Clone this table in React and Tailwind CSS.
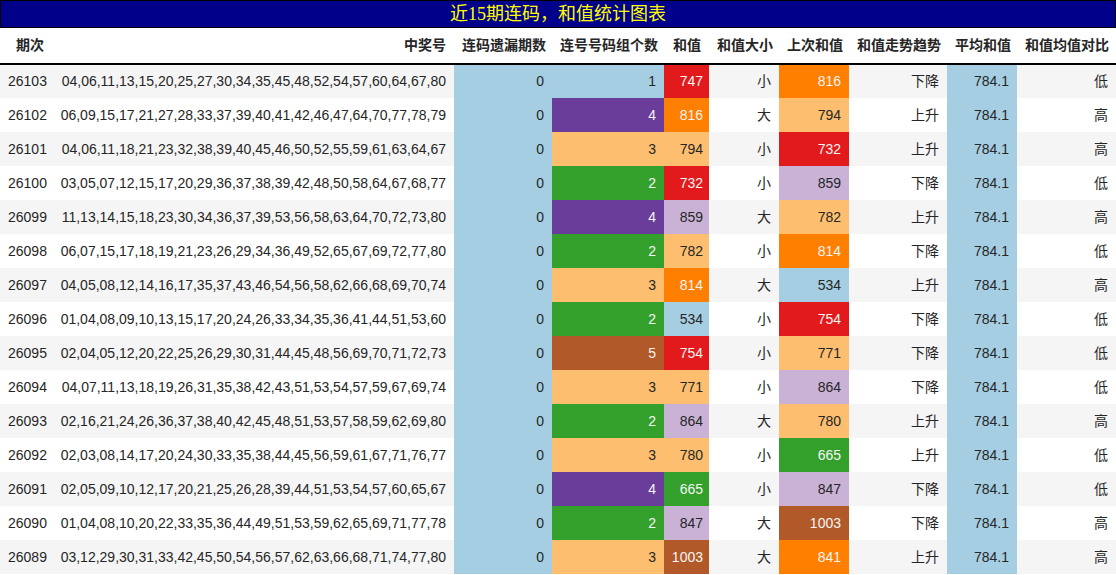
import React from "react";

const rows = [
  ["26103", "04,06,11,13,15,20,25,27,30,34,35,45,48,52,54,57,60,64,67,80", 0, 1, 747, "小", 816, "下降", "低"],
  ["26102", "06,09,15,17,21,27,28,33,37,39,40,41,42,46,47,64,70,77,78,79", 0, 4, 816, "大", 794, "上升", "高"],
  ["26101", "04,06,11,18,21,23,32,38,39,40,45,46,50,52,55,59,61,63,64,67", 0, 3, 794, "小", 732, "上升", "高"],
  ["26100", "03,05,07,12,15,17,20,29,36,37,38,39,42,48,50,58,64,67,68,77", 0, 2, 732, "小", 859, "下降", "低"],
  ["26099", "11,13,14,15,18,23,30,34,36,37,39,53,56,58,63,64,70,72,73,80", 0, 4, 859, "大", 782, "上升", "高"],
  ["26098", "06,07,15,17,18,19,21,23,26,29,34,36,49,52,65,67,69,72,77,80", 0, 2, 782, "小", 814, "下降", "低"],
  ["26097", "04,05,08,12,14,16,17,35,37,43,46,54,56,58,62,66,68,69,70,74", 0, 3, 814, "大", 534, "上升", "高"],
  ["26096", "01,04,08,09,10,13,15,17,20,24,26,33,34,35,36,41,44,51,53,60", 0, 2, 534, "小", 754, "下降", "低"],
  ["26095", "02,04,05,12,20,22,25,26,29,30,31,44,45,48,56,69,70,71,72,73", 0, 5, 754, "小", 771, "下降", "低"],
  ["26094", "04,07,11,13,18,19,26,31,35,38,42,43,51,53,54,57,59,67,69,74", 0, 3, 771, "小", 864, "下降", "低"],
  ["26093", "02,16,21,24,26,36,37,38,40,42,45,48,51,53,57,58,59,62,69,80", 0, 2, 864, "大", 780, "上升", "高"],
  ["26092", "02,03,08,14,17,20,24,30,33,35,38,44,45,56,59,61,67,71,76,77", 0, 3, 780, "小", 665, "上升", "低"],
  ["26091", "02,05,09,10,12,17,20,21,25,26,28,39,44,51,53,54,57,60,65,67", 0, 4, 665, "小", 847, "下降", "低"],
  ["26090", "01,04,08,10,20,22,33,35,36,44,49,51,53,59,62,65,69,71,77,78", 0, 2, 847, "大", 1003, "下降", "高"],
  ["26089", "03,12,29,30,31,33,42,45,50,54,56,57,62,63,66,68,71,74,77,80", 0, 3, 1003, "大", 841, "上升", "高"],
];

// colour bins for the sum columns
function sumColor(v) {
  if (v < 600) return "bg-[#a6cee3] text-[#262626]";
  if (v < 700) return "bg-[#33a02c] text-[#f5f5f5]";
  if (v < 765) return "bg-[#e31a1c] text-[#f5f5f5]";
  if (v < 800) return "bg-[#fdbf6f] text-[#262626]";
  if (v < 845) return "bg-[#ff7f00] text-[#f5f5f5]";
  if (v < 900) return "bg-[#cab2d6] text-[#262626]";
  return "bg-[#b15928] text-[#f5f5f5]";
}

const countColors = {
  1: "bg-[#a6cee3] text-[#262626]",
  2: "bg-[#33a02c] text-[#f5f5f5]",
  3: "bg-[#fdbf6f] text-[#262626]",
  4: "bg-[#6a3d9a] text-[#f5f5f5]",
  5: "bg-[#b15928] text-[#f5f5f5]",
};

const headers = [
  ["期次", "w-[52px]"],
  ["中奖号", "w-[402px]"],
  ["连码遗漏期数", "w-[98px]"],
  ["连号号码组个数", "w-[112px]"],
  ["和值", "w-[45px]"],
  ["和值大小", "w-[70px]"],
  ["上次和值", "w-[70px]"],
  ["和值走势趋势", "w-[98px]"],
  ["平均和值", "w-[70px]"],
  ["和值均值对比", "w-[99px]"],
];

export default function App() {
  return (
    <div
      className="w-[1116px] h-[575px] bg-white text-[#262626] overflow-hidden"
      style={{ fontFamily: '"Liberation Sans", "Noto Sans CJK SC", sans-serif' }}
    >
      {/* Title */}
      <div
        className="h-[28px] border border-black bg-[#00008b] text-[#ffff00] text-[18px] leading-[26px] text-center"
        style={{ fontFamily: '"Liberation Serif", "Noto Sans CJK SC", serif' }}
      >
        近15期连码，和值统计图表
      </div>

      <table className="table-fixed border-collapse w-[1116px] text-[14px]">
        <thead>
          <tr className="h-[36px] border-b-2 border-black">
            {headers.map(([h, w]) => (
              <th key={h} className={`${w} px-2 text-right font-bold whitespace-nowrap`}>
                {h}
              </th>
            ))}
          </tr>
        </thead>
        <tbody>
          {rows.map((r, i) => (
            <tr key={r[0]} className={`h-[34px] ${i % 2 === 0 ? "bg-[#f5f5f5]" : "bg-white"}`}>
              <td className="pl-2 pr-0 text-left whitespace-nowrap">{r[0]}</td>
              <td className="px-2 text-right whitespace-nowrap">{r[1]}</td>
              <td className="px-2 text-right bg-[#a6cee3]">{r[2]}</td>
              <td className={`px-2 text-right ${countColors[r[3]]}`}>{r[3]}</td>
              <td className={`px-1.5 text-right ${sumColor(r[4])}`}>{r[4]}</td>
              <td className="px-2 text-right">{r[5]}</td>
              <td className={`px-2 text-right ${sumColor(r[6])}`}>{r[6]}</td>
              <td className="px-2 text-right">{r[7]}</td>
              <td className="px-2 text-right bg-[#a6cee3]">784.1</td>
              <td className="px-2 text-right">{r[8]}</td>
            </tr>
          ))}
        </tbody>
      </table>
    </div>
  );
}
